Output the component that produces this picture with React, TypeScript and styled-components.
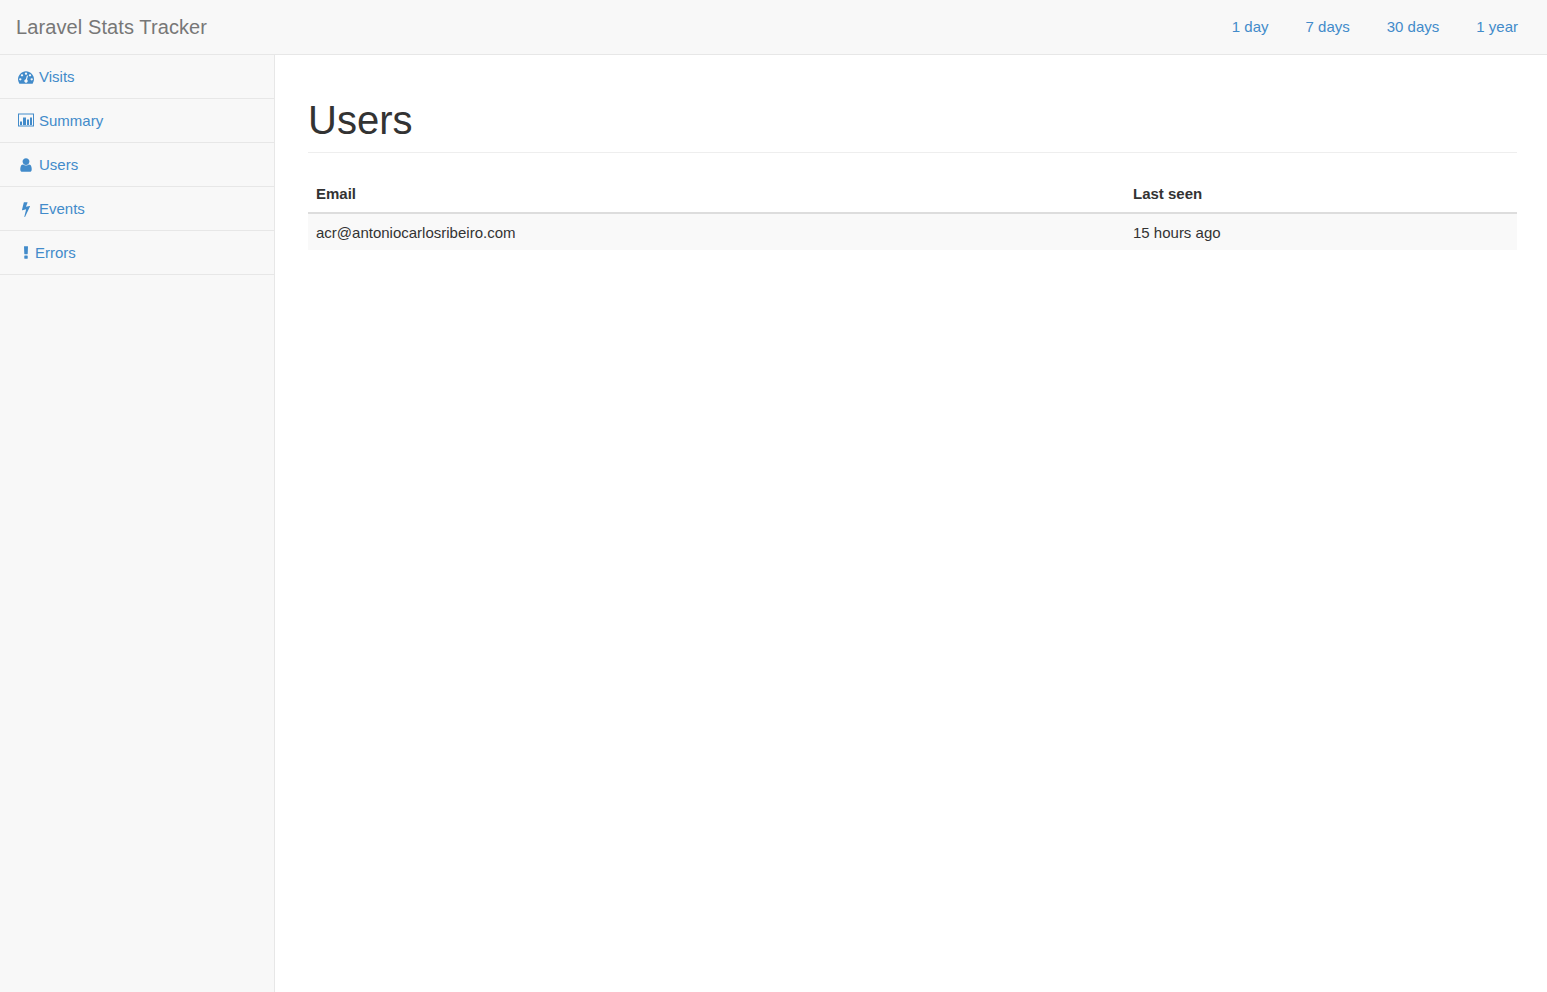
import React from "react";
import styled, { createGlobalStyle } from "styled-components";

const Global = createGlobalStyle`
  html, body { margin: 0; height: 100%; background: #fff; }
  body { font-family: "Liberation Sans", Arial, sans-serif; font-size: 15px; line-height: 21.4px; color: #333; overflow: hidden; }
`;

const Page = styled.div`
  display: flex;
  flex-direction: column;
  height: 992px;
`;
const Navbar = styled.header`
  flex: none;
  height: 54px;
  display: flex;
  align-items: center;
  justify-content: space-between;
  padding: 0 29px 0 16px;
  background: #f8f8f8;
  border-bottom: 1px solid #e7e7e7;
`;
const Brand = styled.a`
  padding-top: 2px;
  font-size: 20px;
  letter-spacing: 0.1px;
  color: #777;
`;
const Periods = styled.nav`
  display: flex;
  gap: 37px;
`;
const Period = styled.a`
  color: #428bca;
`;
const Body = styled.div`
  flex: 1;
  display: flex;
  min-height: 0;
`;
const Sidebar = styled.aside`
  flex: none;
  width: 274px;
  background: #f8f8f8;
  border-right: 1px solid #e7e7e7;
`;
const NavItem = styled.a`
  display: flex;
  align-items: center;
  height: 43px;
  padding-left: 18px;
  border-bottom: 1px solid #e7e7e7;
  color: #428bca;
`;
const Icon = styled.svg<{ $gap: number }>`
  flex: none;
  width: 16px;
  height: 16px;
  margin-right: ${p => p.$gap}px;
  fill: currentColor;
`;
const Main = styled.main`
  flex: 1;
  padding: 0 30px 0 33px;
`;
const Title = styled.h1`
  margin: 43px 0 22px;
  padding-bottom: 10px;
  font-size: 40px;
  line-height: 44px;
  font-weight: 400;
  color: #333;
  border-bottom: 1px solid #eee;
`;
const Table = styled.table`
  width: 100%;
  border-collapse: collapse;
  table-layout: fixed;
`;
const Th = styled.th<{ $w?: string }>`
  padding: 8px;
  text-align: left;
  font-weight: 700;
  border-bottom: 2px solid #ddd;
  width: ${p => p.$w ?? "auto"};
`;
const Td = styled.td`
  padding: 9px 8px 7px;
  line-height: 20px;
  background: #f9f9f9;
`;

const glyphs = {
  dashboard: (
    <path d="M384 1152q0-53-37.5-90.5t-90.5-37.5-90.5 37.5-37.5 90.5 37.5 90.5 90.5 37.5 90.5-37.5 37.5-90.5zm192-448q0-53-37.5-90.5t-90.5-37.5-90.5 37.5-37.5 90.5 37.5 90.5 90.5 37.5 90.5-37.5 37.5-90.5zm428 481l101-382q6-26-7.5-48.5t-38.5-29.5-48 6.5-30 39.5l-101 382q-60 5-107 43.5t-63 98.5q-20 77 20 146t117 89 146-20 89-117q16-60-6-117t-72-91zm660-33q0-53-37.5-90.5t-90.5-37.5-90.5 37.5-37.5 90.5 37.5 90.5 90.5 37.5 90.5-37.5 37.5-90.5zm-640-640q0-53-37.5-90.5t-90.5-37.5-90.5 37.5-37.5 90.5 37.5 90.5 90.5 37.5 90.5-37.5 37.5-90.5zm448 192q0-53-37.5-90.5t-90.5-37.5-90.5 37.5-37.5 90.5 37.5 90.5 90.5 37.5 90.5-37.5 37.5-90.5zm320 448q0 261-141 483-19 29-54 29h-1402q-35 0-54-29-141-221-141-483 0-182 71-348t191-286 286-191 348-71 348 71 286 191 191 286 71 348z" />
  ),
  chart: (
    <path
      fillRule="evenodd"
      d="M0 56h1792v1456h-1792zM112 168v1232h1568v-1232zM224 952h224v392h-224zM560 504h336v840h-336zM1008 728h224v616h-224zM1344 504h224v840h-224z"
    />
  ),
  user: (
    <path d="M1536 1399q0 109-62.5 187t-150.5 78h-854q-88 0-150.5-78t-62.5-187q0-85 8.5-160.5t31.5-152 58.5-131 94-89 134.5-34.5q131 128 313 128t313-128q76 0 134.5 34.5t94 89 58.5 131 31.5 152 8.5 160.5zm-256-887q0 159-112.5 271.5t-271.5 112.5-271.5-112.5-112.5-271.5 112.5-271.5 271.5-112.5 271.5 112.5 112.5 271.5z" />
  ),
  bolt: (
    <path d="M1333 566q18 20 7 44l-540 1157q-13 25-42 25-4 0-14-2-17-5-25.5-19t-4.5-30l197-808-406 101q-4 1-12 1-18 0-31-11-18-15-13-39l201-825q4-14 16-23t28-9h328q19 0 32 12.5t13 29.5q0 8-5 18l-171 463 396-98q8-2 12-2 19 0 34 15z" />
  ),
  exclamation: (
    <path d="M1088 1248v224q0 26-19 45t-45 19h-256q-26 0-45-19t-19-45v-224q0-26 19-45t45-19h256q26 0 45 19t19 45zm30-1056l-28 768q-1 26-20.5 45t-45.5 19h-256q-26 0-45.5-19t-20.5-45l-28-768q-1-26 17.5-45t44.5-19h320q26 0 44.5 19t17.5 45z" />
  ),
};

const items = [
  { label: "Visits", gap: 5, glyph: glyphs.dashboard },
  { label: "Summary", gap: 5, glyph: glyphs.chart },
  { label: "Users", gap: 5, glyph: glyphs.user },
  { label: "Events", gap: 5, glyph: glyphs.bolt },
  { label: "Errors", gap: 1, glyph: glyphs.exclamation },
];

export default function App() {
  return (
    <Page>
      <Global />
      <Navbar>
        <Brand>Laravel Stats Tracker</Brand>
        <Periods>
          {["1 day", "7 days", "30 days", "1 year"].map(p => (
            <Period key={p}>{p}</Period>
          ))}
        </Periods>
      </Navbar>
      <Body>
        <Sidebar>
          {items.map(i => (
            <NavItem key={i.label}>
              <Icon $gap={i.gap} viewBox="0 0 1792 1792">{i.glyph}</Icon>
              {i.label}
            </NavItem>
          ))}
        </Sidebar>
        <Main>
          <Title>Users</Title>
          <Table>
            <thead>
              <tr>
                <Th $w="801px">Email</Th>
                <Th>Last seen</Th>
              </tr>
            </thead>
            <tbody>
              <tr>
                <Td>acr@antoniocarlosribeiro.com</Td>
                <Td>15 hours ago</Td>
              </tr>
            </tbody>
          </Table>
        </Main>
      </Body>
    </Page>
  );
}
